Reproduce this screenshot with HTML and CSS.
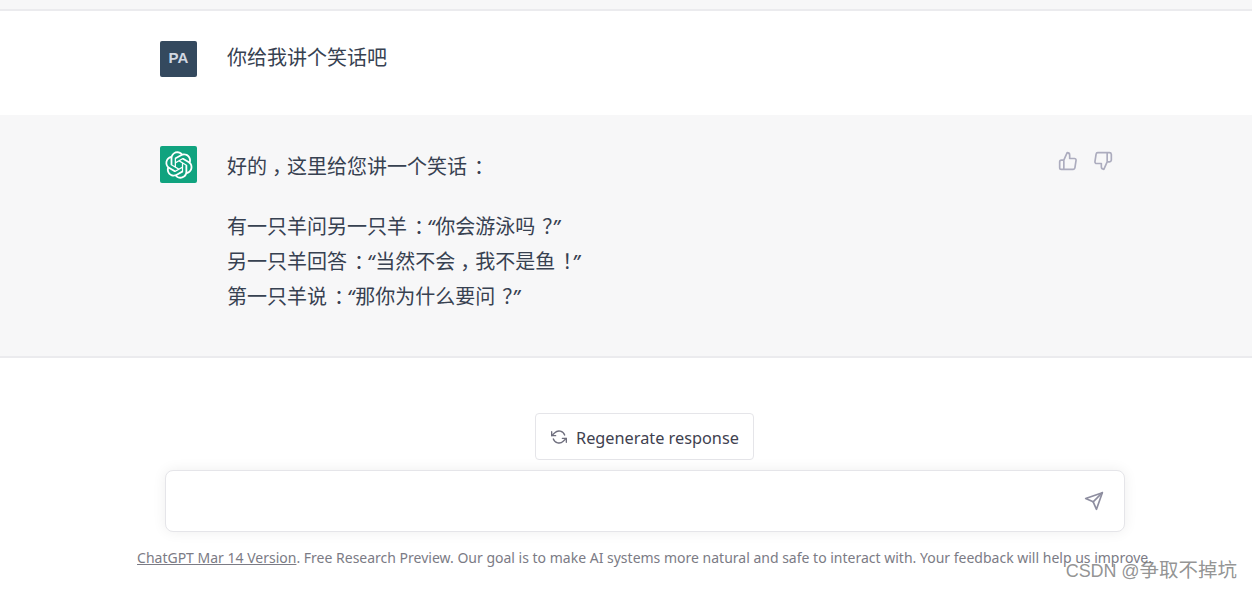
FILE: index.html
```html
<!DOCTYPE html>
<html lang="zh">
<head>
<meta charset="utf-8">
<title>ChatGPT</title>
<link rel="stylesheet" href="styles.css">
</head>
<body>
<main class="page">
  <div class="top-strip"></div>
  <section class="turn user">
    <div class="avatar pa">PA</div>
    <div class="msg"><p>你给我讲个笑话吧</p></div>
  </section>
  <section class="turn bot">
    <div class="avatar gpt">
      <svg viewBox="0 0 41 41" width="28" height="28"><path fill="#fff" d="M37.5324 16.8707C37.9808 15.5241 38.1363 14.0974 37.9886 12.6859C37.8409 11.2744 37.3934 9.91076 36.676 8.68622C35.6126 6.83404 33.9882 5.3676 32.0373 4.4985C30.0864 3.62941 27.9098 3.40259 25.8215 3.85078C24.8796 2.7893 23.7219 1.94125 22.4257 1.36341C21.1295 0.785575 19.7249 0.491269 18.3058 0.500197C16.1708 0.495044 14.0893 1.16803 12.3614 2.42214C10.6335 3.67624 9.34853 5.44666 8.6917 7.47815C7.30085 7.76286 5.98686 8.3414 4.8377 9.17505C3.68854 10.0087 2.73073 11.0782 2.02839 12.312C0.956464 14.1591 0.498905 16.2988 0.721698 18.4228C0.944492 20.5467 1.83612 22.5449 3.268 24.1293C2.81966 25.4759 2.66413 26.9026 2.81182 28.3141C2.95951 29.7256 3.40701 31.0892 4.12437 32.3138C5.18791 34.1659 6.8123 35.6322 8.76321 36.5013C10.7141 37.3704 12.8907 37.5973 14.9789 37.1492C15.9208 38.2107 17.0786 39.0587 18.3747 39.6366C19.6709 40.2144 21.0755 40.5087 22.4946 40.4998C24.6307 40.5054 26.7133 39.8321 28.4418 38.5772C30.1704 37.3223 31.4556 35.5506 32.1119 33.5179C33.5027 33.2332 34.8167 32.6547 35.9659 31.821C37.115 30.9874 38.0728 29.9178 38.7752 28.684C39.8458 26.8371 40.3023 24.6979 40.0789 22.5748C39.8556 20.4517 38.9639 18.4544 37.5324 16.8707ZM22.4978 37.8849C20.7443 37.8874 19.0459 37.2733 17.6994 36.1501C17.7601 36.117 17.8666 36.0586 17.936 36.0161L25.9004 31.4156C26.1003 31.3019 26.2663 31.137 26.3813 30.9378C26.4964 30.7386 26.5563 30.5124 26.5549 30.2825V19.0542L29.9213 20.998C29.9389 21.0068 29.9541 21.0198 29.9656 21.0359C29.977 21.052 29.9842 21.0707 29.9867 21.0902V30.3889C29.9842 32.375 29.1946 34.2791 27.7909 35.6841C26.3872 37.0892 24.4838 37.8806 22.4978 37.8849ZM6.39227 31.0064C5.51397 29.4888 5.19742 27.7107 5.49804 25.9832C5.55718 26.0187 5.66048 26.0818 5.73461 26.1244L13.699 30.7248C13.8975 30.8408 14.1233 30.902 14.3532 30.902C14.583 30.902 14.8088 30.8408 15.0073 30.7248L24.731 25.1103V28.9979C24.7321 29.0177 24.7283 29.0376 24.7199 29.0556C24.7115 29.0736 24.6988 29.0893 24.6829 29.1012L16.6317 33.7497C14.9096 34.7416 12.8643 35.0097 10.9447 34.4954C9.02506 33.9811 7.38785 32.7263 6.39227 31.0064ZM4.29707 13.6194C5.17156 12.0998 6.55279 10.9364 8.19885 10.3327C8.19885 10.4013 8.19491 10.5228 8.19491 10.6071V19.808C8.19351 20.0378 8.25334 20.2638 8.36823 20.4629C8.48312 20.6619 8.64893 20.8267 8.84863 20.9404L18.5723 26.5542L15.206 28.4979C15.1894 28.5089 15.1703 28.5155 15.1505 28.5173C15.1307 28.5191 15.1107 28.516 15.0924 28.5082L7.04046 23.8557C5.32135 22.8601 4.06716 21.2235 3.55289 19.3046C3.03862 17.3858 3.30624 15.3413 4.29707 13.6194ZM31.955 20.0556L22.2312 14.4411L25.5976 12.4981C25.6142 12.4872 25.6333 12.4805 25.6531 12.4787C25.6729 12.4769 25.6928 12.4801 25.7111 12.4879L33.7631 17.1364C34.9967 17.849 36.0017 18.8982 36.6606 20.1613C37.3194 21.4244 37.6047 22.849 37.4832 24.2684C37.3617 25.6878 36.8382 27.0432 35.9743 28.1759C35.1103 29.3086 33.9415 30.1717 32.6047 30.6641C32.6047 30.5947 32.6047 30.4733 32.6047 30.3889V21.188C32.6066 20.9586 32.5474 20.7328 32.4332 20.5338C32.319 20.3348 32.154 20.1698 31.955 20.0556ZM35.3055 15.0128C35.2464 14.9765 35.1431 14.9142 35.069 14.8717L27.1045 10.2712C26.906 10.1554 26.6803 10.0943 26.4504 10.0943C26.2206 10.0943 25.9948 10.1554 25.7963 10.2712L16.0726 15.8858V11.9982C16.0715 11.9783 16.0753 11.9585 16.0837 11.9405C16.0921 11.9225 16.1048 11.9068 16.1207 11.8949L24.1719 7.25025C25.4053 6.53903 26.8158 6.19376 28.2383 6.25482C29.6608 6.31589 31.0364 6.78077 32.2044 7.59508C33.3723 8.40939 34.2842 9.53945 34.8334 10.8531C35.3826 12.1667 35.5464 13.6095 35.3055 15.0128ZM14.2424 21.9419L10.8752 19.9981C10.8576 19.9893 10.8423 19.9763 10.8309 19.9602C10.8195 19.9441 10.8122 19.9254 10.8098 19.9058V10.6071C10.8107 9.18295 11.2173 7.78848 11.9819 6.58696C12.7466 5.38544 13.8377 4.42659 15.1275 3.82264C16.4173 3.21869 17.8524 2.99464 19.2649 3.1767C20.6775 3.35876 22.0089 3.93941 23.1034 4.85067C23.0427 4.88379 22.937 4.94215 22.8668 4.98473L14.9024 9.58517C14.7025 9.69878 14.5366 9.86356 14.4215 10.0626C14.3065 10.2616 14.2466 10.4877 14.2479 10.7175L14.2424 21.9419ZM16.071 17.9991L20.4018 15.4978L24.7325 17.9975V22.9985L20.4018 25.4983L16.071 22.9985V17.9991Z"/></svg>
    </div>
    <div class="msg">
      <p class="first">好的<span class="pn comma">，</span>这里给您讲一个笑话<span class="pn">：</span></p>
      <p>有一只羊问另一只羊<span class="pn">：</span><span class="qt">“</span>你会游泳吗<span class="pn">？</span><span class="qt end">”</span><br>另一只羊回答<span class="pn">：</span><span class="qt">“</span>当然不会<span class="pn comma">，</span>我不是鱼<span class="pn">！</span><span class="qt end">”</span><br>第一只羊说<span class="pn">：</span><span class="qt">“</span>那你为什么要问<span class="pn">？</span><span class="qt end">”</span></p>
    </div>
    <div class="votes">
      <svg class="ico" viewBox="0 0 24 24"><path d="M14 9V5a3 3 0 0 0-3-3l-4 9v11h11.28a2 2 0 0 0 2-1.7l1.38-9a2 2 0 0 0-2-2.3zM7 22H4a2 2 0 0 1-2-2v-7a2 2 0 0 1 2-2h3"/></svg>
      <svg class="ico" viewBox="0 0 24 24"><path d="M10 15v4a3 3 0 0 0 3 3l4-9V2H5.72a2 2 0 0 0-2 1.7l-1.38 9a2 2 0 0 0 2 2.3zm7-13h2.67A2.31 2.31 0 0 1 22 4v7a2.31 2.31 0 0 1-2.33 2H17"/></svg>
    </div>
  </section>
  <section class="composer">
    <button class="regen" type="button">
      <svg class="regen-ico" viewBox="0 0 24 24"><polyline points="1 4 1 10 7 10"/><polyline points="23 20 23 14 17 14"/><path d="M20.49 9A9 9 0 0 0 5.64 5.64L1 10m22 4l-4.64 4.36A9 9 0 0 1 3.51 15"/></svg>
      <span>Regenerate response</span>
    </button>
    <div class="input-box">
      <svg class="send" viewBox="0 0 24 24"><line x1="22" y1="2" x2="11" y2="13"/><polygon points="22 2 15 22 11 13 2 9 22 2"/></svg>
    </div>
    <p class="note"><a href="#">ChatGPT Mar 14 Version</a>. Free Research Preview. Our goal is to make AI systems more natural and safe to interact with. Your feedback will help us improve.</p>
  </section>
  <div class="watermark"><span class="wm-latin">CSDN @</span>争取不掉坑</div>
</main>
</body>
</html>
```

FILE: styles.css
```css
* { box-sizing: border-box; }
html, body { margin: 0; padding: 0; height: 100%; background: #fff; }
body { overflow: hidden; }
.page {
  position: relative;
  width: 1252px;
  height: 589px;
  overflow: hidden;
  font-family: "Noto Sans", "Noto Sans CJK SC", sans-serif;
  color: #374151;
}
.top-strip {
  height: 11px;
  background: #f7f7f8;
  border-bottom: 2px solid #ebebee;
}
.turn {
  display: flex;
  padding-left: 160px;
  padding-right: 139px;
}
.user { height: 104px; padding-top: 30px; }
.bot {
  height: 243px;
  padding-top: 31px;
  background: #f7f7f8;
  border-bottom: 2px solid #ebebee;
}
.avatar {
  flex: none;
  width: 37px;
  height: 37px;
  border-radius: 2px;
  display: flex;
  align-items: center;
  justify-content: center;
}
.pa {
  height: 36px;
  padding-bottom: 3px;
  background: #34495e;
  color: #d3d8e2;
  font: 700 15px "Liberation Sans", sans-serif;
  letter-spacing: 0.2px;
}
.gpt { background: #10a37f; }
.msg {
  flex: 1;
  margin-left: 30px;
  font-family: "Noto Sans CJK SC", sans-serif;
  font-size: 20px;
  line-height: 35px;
  color: #374151;
}
.msg p { margin: 0; }
.msg .first { margin-top: 2px; margin-bottom: 25px; }
.user .msg { margin-top: -2px; }
.pn {
  display: inline-block;
  width: 20px;
  line-height: 1;
  transform: translateX(7px);
}
.comma { transform: translateX(5px); }
.qt {
  font-family: "Noto Sans", sans-serif;
  font-style: italic;
  line-height: 0;
  letter-spacing: 1px;
}
.qt.end { margin-left: -3px; }
.votes { display: flex; gap: 15px; margin-top: 5px; }
.ico {
  width: 20px;
  height: 20px;
  fill: none;
  stroke: #acacbe;
  stroke-width: 2;
  stroke-linecap: round;
  stroke-linejoin: round;
}
.composer {
  display: flex;
  flex-direction: column;
  align-items: center;
  padding-top: 55px;
  padding-left: 37px;
}
.regen {
  width: 219px;
  height: 47px;
  display: flex;
  align-items: center;
  gap: 9px;
  padding: 2px 0 0 15px;
  background: #fff;
  border: 1px solid #e5e5e9;
  border-radius: 4px;
  font-family: "Noto Sans", sans-serif;
  font-size: 16.3px;
  color: #40414f;
}
.regen-ico {
  width: 16px;
  height: 16px;
  margin-top: -2px;
  fill: none;
  stroke: #6f6f7e;
  stroke-width: 2;
  stroke-linecap: round;
  stroke-linejoin: round;
}
.input-box {
  width: 960px;
  height: 62px;
  margin-top: 10px;
  margin-left: 1px;
  display: flex;
  align-items: center;
  justify-content: flex-end;
  padding-right: 20px;
  background: #fff;
  border: 1px solid #e5e5e9;
  border-radius: 8px;
  box-shadow: 0 0 14px rgba(0, 0, 0, 0.07);
}
.send {
  width: 20px;
  height: 20px;
  fill: none;
  stroke: #8e8ea0;
  stroke-width: 2;
  stroke-linecap: round;
  stroke-linejoin: round;
}
.note {
  margin: 16px 0 0;
  font-size: 14px;
  letter-spacing: 0.001px;
  line-height: 19px;
  color: #7b7b85;
  white-space: nowrap;
  align-self: center;
}
.note a { color: inherit; text-decoration: underline; }
.watermark {
  position: absolute;
  right: 15px;
  bottom: 6px;
  font-family: "Liberation Sans", "Noto Sans CJK SC", sans-serif;
  font-size: 19.5px;
  line-height: 24px;
  color: rgba(120, 120, 120, 0.8);
}
.wm-latin { font-size: 18px; letter-spacing: -0.1px; }
```
